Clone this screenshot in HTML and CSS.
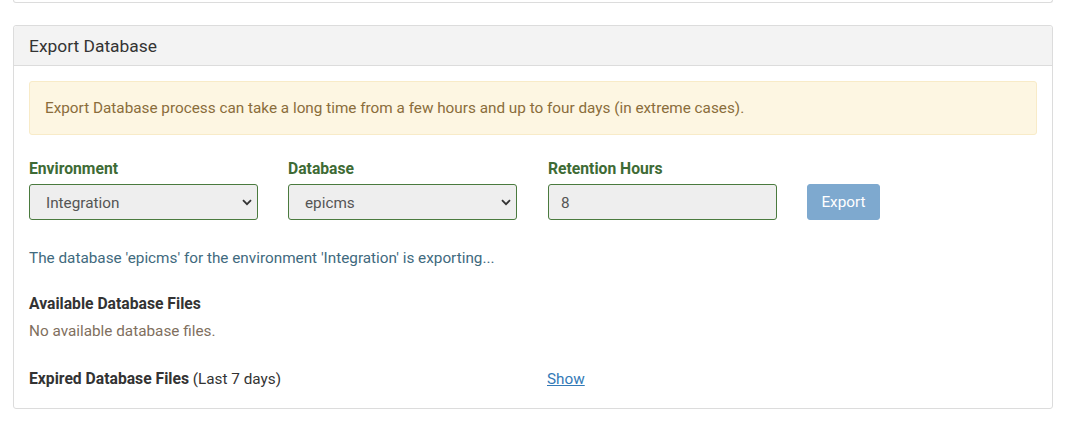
FILE: index.html
```html
<!DOCTYPE html>
<html>
<head>
<meta charset="utf-8">
<link rel="stylesheet" href="styles.css">
</head>
<body>
<div class="page">
  <div class="card card-top"></div>
  <div class="card">
    <div class="card-header">Export Database</div>
    <div class="card-body">
      <div class="alert">Export Database process can take a long time from a few hours and up to four days (in extreme cases).</div>
      <div class="form-row">
        <div class="field">
          <label class="label">Environment</label>
          <div class="select-wrap">
            <div class="control">Integration</div>
            <svg class="chev" width="10" height="7" viewBox="0 0 10 7"><path d="M1 1.2 L5 5.2 L9 1.2" fill="none" stroke="#333" stroke-width="1.8"/></svg>
          </div>
        </div>
        <div class="field">
          <label class="label">Database</label>
          <div class="select-wrap">
            <div class="control">epicms</div>
            <svg class="chev" width="10" height="7" viewBox="0 0 10 7"><path d="M1 1.2 L5 5.2 L9 1.2" fill="none" stroke="#333" stroke-width="1.8"/></svg>
          </div>
        </div>
        <div class="field">
          <label class="label">Retention Hours</label>
          <div class="control input">8</div>
        </div>
        <div class="btn-col">
          <button class="btn">Export</button>
        </div>
      </div>
      <p class="status">The database 'epicms' for the environment 'Integration' is exporting...</p>
      <h4 class="subhead">Available Database Files</h4>
      <p class="muted">No available database files.</p>
      <div class="expired">
        <span class="expired-title"><b>Expired Database Files</b> (Last 7 days)</span>
        <a class="link" href="#">Show</a>
      </div>
    </div>
  </div>
</div>
</body>
</html>
```
FILE: styles.css
```css
* { box-sizing: border-box; }
html, body { margin: 0; padding: 0; background: #fff; }
body {
  font-family: Roboto, "Liberation Sans", sans-serif;
  font-size: 15.3px;
  color: #333;
}
.page { padding: 0 14px 0 13px; }
.card {
  border: 1px solid #dcdcdc;
  border-radius: 3px;
  background: #fff;
}
.card-top {
  height: 3px;
  border-top: none;
  border-radius: 0 0 3px 3px;
  margin-bottom: 22px;
}
.card-header {
  background: #f3f3f3;
  border-bottom: 1px solid #dcdcdc;
  height: 40px;
  padding: 0 15px;
  display: flex;
  align-items: center;
  font-size: 17.4px;
  color: #333;
  border-radius: 3px 3px 0 0;
}
.card-body { padding: 15px 15px 19px 15px; }
.alert {
  background: #fdf6e2;
  border: 1px solid #f8ebc8;
  border-radius: 3px;
  color: #8a6d3b;
  height: 54px;
  padding: 0 15px;
  display: flex;
  align-items: center;
  margin-bottom: 24px;
}
.form-row {
  display: flex;
  gap: 30px;
  align-items: flex-end;
}
.field { width: 229px; display: flex; flex-direction: column; }
.field:nth-child(3) { margin-left: 1px; }
.label {
  font-weight: 700;
  color: #3e6b35;
  font-size: 15.7px;
  height: 19px;
  line-height: 19px;
  margin-bottom: 6px;
}
.select-wrap { position: relative; }
.control {
  height: 36px;
  background: #eee;
  border: 1px solid #4a7a3e;
  border-radius: 3px;
  padding: 0 16px;
  display: flex;
  align-items: center;
  color: #555;
  padding-top: 2px;
}
.input { padding-left: 12px; }
.chev { position: absolute; right: 6px; top: 15px; }
.btn-col { display: flex; }
.btn {
  width: 73px;
  height: 36px;
  background: #7ea9cf;
  border: 1px solid #7ea9cf;
  border-radius: 3px;
  color: #fff;
  font-family: inherit;
  font-size: 15.3px;
  padding: 0;
}
.status {
  margin: 28px 0 0;
  color: #3f6a7e;
  line-height: 20px;
}
.subhead {
  margin: 26px 0 0;
  font-size: 15.7px;
  font-weight: 700;
  color: #333;
  line-height: 20px;
}
.muted {
  margin: 7px 0 0;
  color: #7f6f5e;
  line-height: 20px;
}
.expired {
  margin-top: 28px;
  display: flex;
  line-height: 20px;
}
.expired-title { width: 518px; }
.expired-title b { color: #333; font-size: 15.7px; }
.link { color: #337ab7; text-decoration: underline; }
```
